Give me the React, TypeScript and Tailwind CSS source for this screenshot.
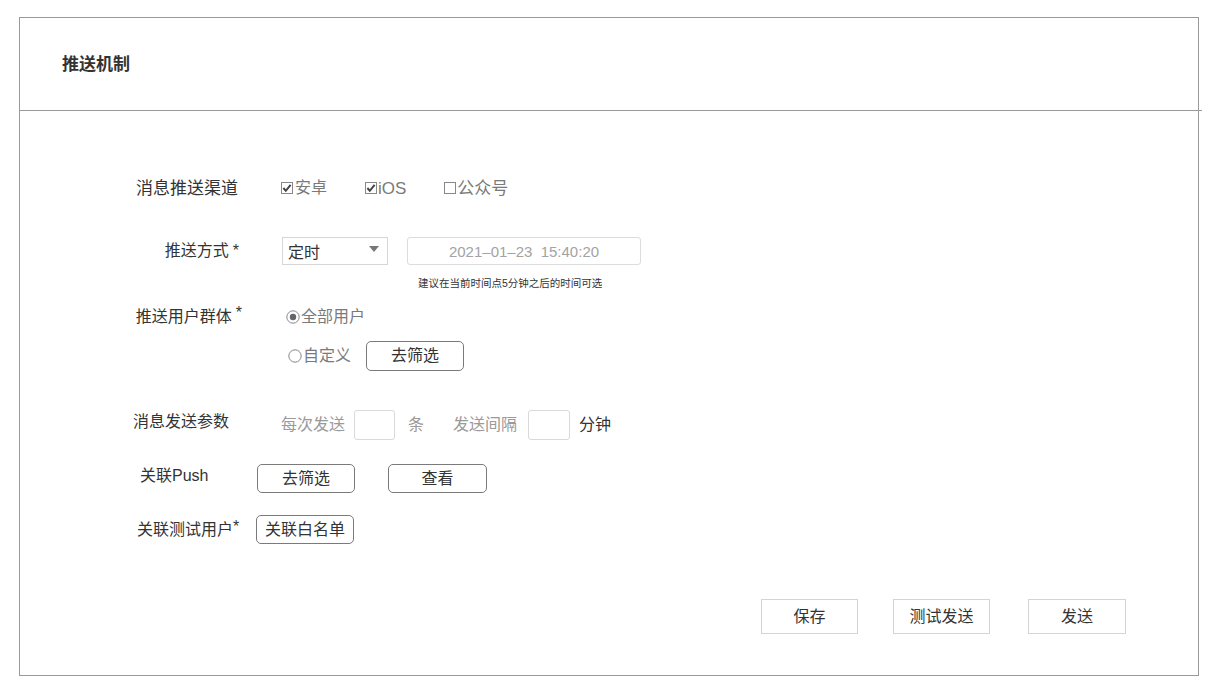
import React from "react";

const Check = ({ checked }: { checked: boolean }) => (
  <svg width="12" height="12" viewBox="0 0 12 12" className="shrink-0">
    <rect x="0.5" y="0.5" width="11" height="11" fill="#fff" stroke="#888" />
    {checked && (
      <path d="M2.4 6 L4.8 8.8 L9.6 2.8" fill="none" stroke="#444" strokeWidth="2" />
    )}
  </svg>
);

const Radio = ({ checked }: { checked: boolean }) => (
  <svg width="14" height="14" viewBox="0 0 14 14" className="shrink-0">
    <circle cx="7" cy="7" r="6.2" fill="#fff" stroke="#888" strokeWidth="1" />
    {checked && <circle cx="7" cy="7" r="3.2" fill="#666" />}
  </svg>
);

export default function App() {
  return (
    <div
      className="w-[1212px] h-[690px] bg-white pt-[17px] pl-[19px] text-[#333]"
      style={{ fontFamily: '"Liberation Sans", "Noto Sans CJK SC", sans-serif' }}
    >
      <div className="w-[1180px] h-[659px] border border-[#9a9a9a] flex flex-col">
        {/* header */}
        <div className="h-[92px] flex items-center pl-[42px]">
          <span className="text-[17px] font-bold leading-none text-[#333]">推送机制</span>
        </div>
        <div className="h-px w-[1182px] bg-[#9a9a9a]" />

        {/* row 1 */}
        <div className="mt-[65px] h-[24px] flex items-center">
          <div className="w-[261px] pr-[43px] flex justify-end">
            <span className="text-[17px] leading-none text-[#333]">消息推送渠道</span>
          </div>
          <div className="flex items-center text-[16px] leading-none text-[#7a7a7a]">
            <div className="flex items-center gap-[2px]">
              <Check checked />
              <span>安卓</span>
            </div>
            <div className="ml-[38px] flex items-center gap-[1px]">
              <Check checked />
              <span className="text-[17px]">iOS</span>
            </div>
            <div className="ml-[38px] flex items-center gap-[1px]">
              <Check checked={false} />
              <span className="text-[17px]">公众号</span>
            </div>
          </div>
        </div>

        {/* row 2 */}
        <div className="mt-[37px] h-[28px] flex items-center">
          <div className="w-[262px] pr-[43px] flex justify-end items-center">
            <span className="text-[16px] leading-none text-[#333]">推送方式</span>
            <span className="ml-[4px] text-[16px] leading-none text-[#333]">*</span>
          </div>
          <div className="w-[106px] h-[28px] border border-[#d6d6d6] flex items-end justify-between pl-[5px] pr-[8px] pb-[3px]">
            <span className="text-[16px] leading-none text-[#333]">定时</span>
            <svg width="10" height="6" viewBox="0 0 10 6" className="mb-[9px]">
              <path d="M0 0 H10 L5 6 Z" fill="#777" />
            </svg>
          </div>
          <div className="ml-[19px] w-[234px] h-[28px] border border-[#dcdcdc] rounded-[3px] flex items-center justify-center">
            <span className="text-[15px] leading-none text-[#a3a3a3] whitespace-pre">2021–01–23  15:40:20</span>
          </div>
        </div>
        <div className="mt-[11px] ml-[398px] text-[10.5px] leading-[14px] text-[#333]">
          建议在当前时间点5分钟之后的时间可选
        </div>

        {/* row 3 */}
        <div className="mt-[17px] h-[20px] flex items-center">
          <div className="w-[266px] pr-[44px] flex justify-end items-start">
            <span className="text-[16px] leading-none text-[#333]">推送用户群体</span>
            <span className="ml-[4px] text-[16px] leading-none text-[#333] -mt-[4px]">*</span>
          </div>
          <div className="flex items-center gap-[1px] text-[16px] leading-none text-[#7a7a7a]">
            <Radio checked />
            <span>全部用户</span>
          </div>
        </div>
        <div className="mt-[14px] h-[30px] flex items-center">
          <div className="w-[268px]" />
          <div className="flex items-center gap-[1px] text-[16px] leading-none text-[#7a7a7a]">
            <Radio checked={false} />
            <span>自定义</span>
          </div>
          <div className="ml-[15px] w-[98px] h-[30px] border border-[#7a7a7a] rounded-[5px] flex items-center justify-center">
            <span className="text-[16px] leading-none text-[#333]">去筛选</span>
          </div>
        </div>

        {/* row 4 */}
        <div className="mt-[39px] h-[30px] flex items-center">
          <div className="w-[261px] pl-[113px] -mt-[6px]">
            <span className="text-[16px] leading-none text-[#333]">消息发送参数</span>
          </div>
          <span className="text-[16px] leading-none text-[#9a9a9a]">每次发送</span>
          <div className="ml-[9px] w-[41px] h-[30px] border border-[#d9d9d9] rounded-[3px]" />
          <span className="ml-[13px] text-[16px] leading-none text-[#9a9a9a]">条</span>
          <span className="ml-[29px] text-[16px] leading-none text-[#9a9a9a]">发送间隔</span>
          <div className="ml-[11px] w-[42px] h-[30px] border border-[#d9d9d9] rounded-[3px]" />
          <span className="ml-[9px] text-[16px] leading-none text-[#333]">分钟</span>
        </div>

        {/* row 5 */}
        <div className="mt-[24px] h-[29px] flex items-center">
          <div className="w-[237px] pl-[120px] -mt-[5px]">
            <span className="text-[16px] leading-none text-[#333]">关联Push</span>
          </div>
          <div className="w-[98px] h-[29px] border border-[#7a7a7a] rounded-[5px] flex items-center justify-center">
            <span className="text-[16px] leading-none text-[#333]">去筛选</span>
          </div>
          <div className="ml-[33px] w-[99px] h-[29px] border border-[#7a7a7a] rounded-[5px] flex items-center justify-center">
            <span className="text-[16px] leading-none text-[#333]">查看</span>
          </div>
        </div>

        {/* row 6 */}
        <div className="mt-[22px] h-[29px] flex items-center">
          <div className="w-[236px] pl-[117px] flex items-start">
            <span className="text-[16px] leading-none text-[#333]">关联测试用户</span>
            <span className="text-[16px] leading-none text-[#333] -mt-[3px]">*</span>
          </div>
          <div className="w-[98px] h-[29px] border border-[#7a7a7a] rounded-[5px] flex items-center justify-center">
            <span className="text-[16px] leading-none text-[#333]">关联白名单</span>
          </div>
        </div>

        {/* bottom buttons */}
        <div className="mt-[55px] flex items-center">
          <div className="ml-[741px] w-[97px] h-[35px] border border-[#d4d4d4] flex items-center justify-center">
            <span className="text-[16px] leading-none text-[#333]">保存</span>
          </div>
          <div className="ml-[35px] w-[97px] h-[35px] border border-[#d4d4d4] flex items-center justify-center">
            <span className="text-[16px] leading-none text-[#333]">测试发送</span>
          </div>
          <div className="ml-[38px] w-[98px] h-[35px] border border-[#d4d4d4] flex items-center justify-center">
            <span className="text-[16px] leading-none text-[#333]">发送</span>
          </div>
        </div>
      </div>
    </div>
  );
}
